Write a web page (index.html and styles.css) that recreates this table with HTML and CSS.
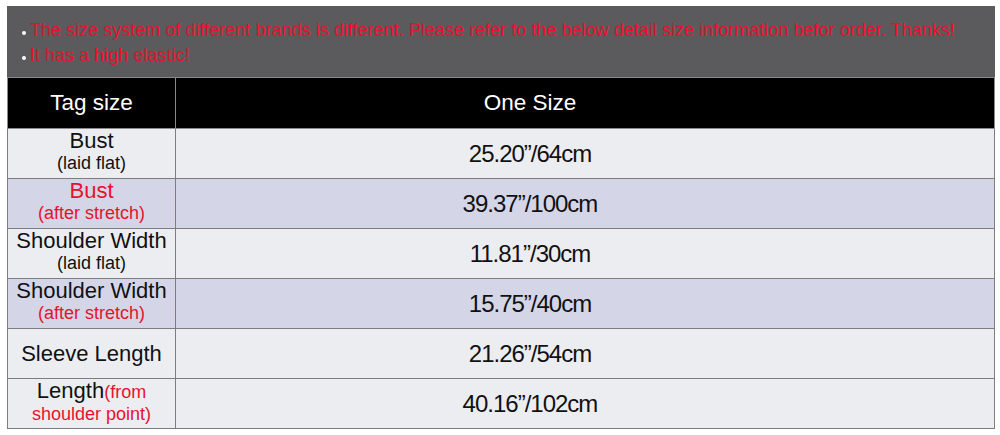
FILE: index.html
```html
<!DOCTYPE html>
<html>
<head>
<meta charset="utf-8">
<link rel="stylesheet" href="styles.css">
</head>
<body>
<div class="chart">
  <div class="notes">
    <div class="note"><span class="dot"></span><span class="note-text">The size system of different brands is different. Please refer to the below detail size information befor order. Thanks!</span></div>
    <div class="note"><span class="dot"></span><span class="note-text">It has a high elastic!</span></div>
  </div>
  <table class="sizes">
    <thead>
      <tr><th class="c1">Tag size</th><th class="c2">One Size</th></tr>
    </thead>
    <tbody>
      <tr class="light"><td class="label"><span class="main">Bust</span><span class="sub">(laid flat)</span></td><td class="val">25.20”/64cm</td></tr>
      <tr class="alt"><td class="label red"><span class="main">Bust</span><span class="sub">(after stretch)</span></td><td class="val">39.37”/100cm</td></tr>
      <tr class="light"><td class="label"><span class="main">Shoulder Width</span><span class="sub">(laid flat)</span></td><td class="val">11.81”/30cm</td></tr>
      <tr class="alt"><td class="label"><span class="main">Shoulder Width</span><span class="sub red">(after stretch)</span></td><td class="val">15.75”/40cm</td></tr>
      <tr class="light"><td class="label single"><span class="main">Sleeve Length</span></td><td class="val">21.26”/54cm</td></tr>
      <tr class="light"><td class="label"><span class="main">Length<span class="red small">(from</span></span><span class="sub red">shoulder point)</span></td><td class="val">40.16”/102cm</td></tr>
    </tbody>
  </table>
</div>
</body>
</html>
```

FILE: styles.css
```css
html, body {
  margin: 0;
  padding: 0;
  background: #ffffff;
}
body {
  font-family: "Liberation Sans", Arial, sans-serif;
}
.chart {
  margin: 6px 5px 0 7px;
  width: 988px;
}
.notes {
  background: #5b5a5c;
  height: 72px;
  padding: 12px 0 0 15px;
  box-sizing: border-box;
  border-bottom: 1px solid #8a8a8a;
}
.note {
  display: flex;
  align-items: center;
  height: 24px;
}
.note + .note {
  margin-top: 1px;
}
.dot {
  width: 4px;
  height: 4px;
  border-radius: 50%;
  background: #ffffff;
  margin: 6px 4px 0 0;
  flex: none;
}
.note-text {
  color: #e8112b;
  font-size: 18px;
  letter-spacing: 0.03px;
}
.sizes {
  width: 988px;
  border-collapse: collapse;
  table-layout: fixed;
}
.sizes th, .sizes td {
  border: 1px solid #7d7d80;
  text-align: center;
  padding: 0;
}
.sizes thead th {
  background: #000000;
  color: #ffffff;
  font-weight: normal;
  font-size: 22.5px;
  height: 50px;
  border-color: #8a8a8a;
  border-top: none;
}
.sizes th.c2, .sizes td.val {
  padding-right: 110px;
}
.c1 {
  width: 167px;
}
.sizes td {
  height: 49px;
  color: #111111;
}
.light td {
  background: #ecedf1;
}
.alt td {
  background: #d4d6e8;
}
.main {
  display: block;
  font-size: 22px;
  line-height: 20px;
}
.single .main {
  line-height: 26px;
}
.sub {
  display: block;
  font-size: 18px;
  line-height: 25px;
}
.small {
  font-size: 18px;
}
.sizes td.red, .red {
  color: #e8112b;
}
.val {
  font-size: 24px;
  letter-spacing: -1px;
}
```
